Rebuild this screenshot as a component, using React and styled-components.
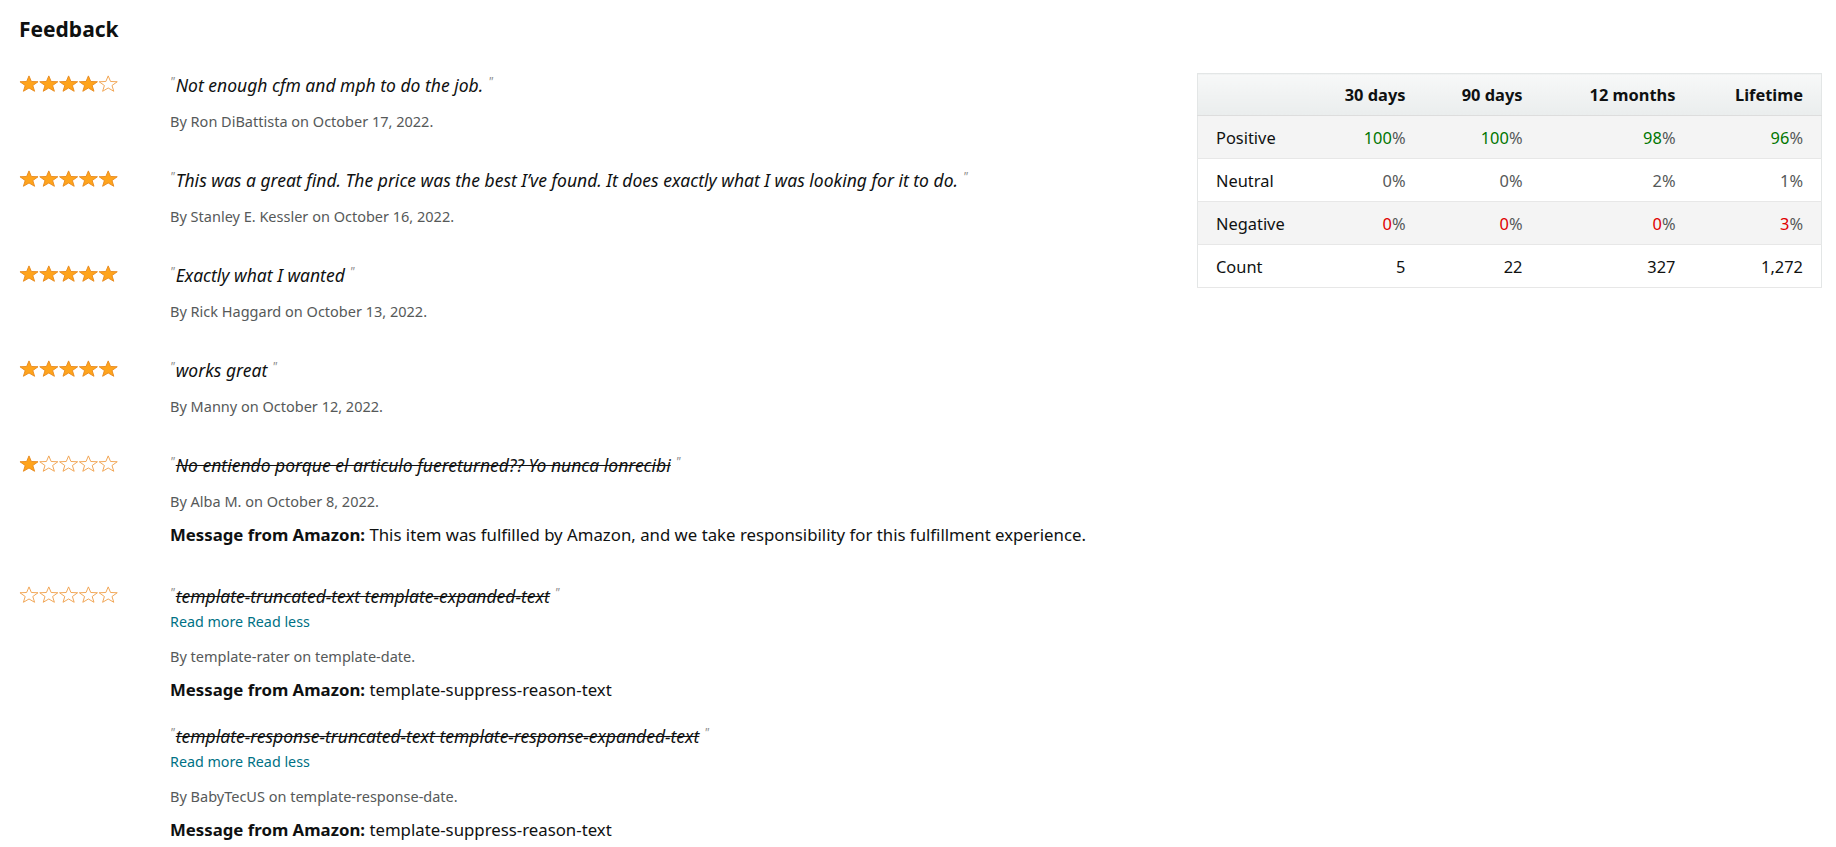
import React from 'react';
import styled, { createGlobalStyle } from 'styled-components';

const GlobalStyle = createGlobalStyle`
  body {
    margin: 0;
    background: #fff;
    font-family: "Noto Sans", "Liberation Sans", sans-serif;
    color: #0f1111;
  }
`;

const Page = styled.div`
  padding: 12px 14px 0 19px;
`;

const Title = styled.h3`
  margin: 0 0 27px;
  font-size: 21px;
  line-height: 34px;
  font-weight: 700;
`;

const Layout = styled.div`
  display: flex;
  justify-content: space-between;
  align-items: flex-start;
`;

const List = styled.div`
  display: flex;
  flex-direction: column;
`;

const Row = styled.div`
  display: grid;
  grid-template-columns: 151px 1fr;
  padding-bottom: 37px;
`;

const Stars = styled.svg`
  display: block;
  margin-top: 2px;
`;

const Body = styled.div`
  display: flex;
  flex-direction: column;
  align-items: flex-start;
`;

const Quote = styled.div`
  font-size: 17.5px;
  line-height: 24px;
  font-style: italic;
  margin-top: ${(p) => (p.$gap ? '22px' : '0')};
`;

const Mark = styled.span`
  color: #8a8a8a;
  font-size: 12px;
  line-height: 1;
  vertical-align: 6px;
  margin: ${(p) => (p.$end ? '0 0 0 5px' : '0 1px 0 0')};
`;

const Struck = styled.span`
  text-decoration: ${(p) => (p.$struck ? 'line-through' : 'none')};
`;

const ReadMore = styled.a`
  margin-top: 4px;
  font-size: 14.3px;
  line-height: 20px;
  color: #007185;
  text-decoration: none;
  cursor: pointer;
`;

const Byline = styled.div`
  margin-top: 14px;
  font-size: 14.5px;
  line-height: 20px;
  color: #565959;
`;

const Message = styled.div`
  margin-top: 12px;
  font-size: 16.8px;
  line-height: 24px;

  b {
    font-weight: 700;
  }
`;

const Table = styled.table`
  width: 624px;
  table-layout: fixed;
  border-collapse: collapse;
  border: 1px solid #e3e6e6;
  font-size: 16.4px;
`;

const Col = styled.col`
  width: ${(p) => p.$w}px;
`;

const Th = styled.th`
  height: 41px;
  padding: 0 18px;
  text-align: ${(p) => (p.$left ? 'left' : 'right')};
  font-weight: 700;
  background: linear-gradient(to bottom, #f7f8f8, #eaeded);
  border-bottom: 1px solid #dddddd;
`;

const Tr = styled.tr`
  background: ${(p) => (p.$shade ? '#f4f4f4' : '#fff')};
  border-bottom: 1px solid #e7e7e7;
`;

const Td = styled.td`
  height: 42px;
  padding: 0 18px;
  text-align: ${(p) => (p.$left ? 'left' : 'right')};
  color: ${(p) => p.$color || '#0f1111'};
`;

const Good = styled.span`
  color: #007600;
`;

const Bad = styled.span`
  color: #e00000;
`;

const STAR = '10,1 12.35,7.26 19.03,7.56 13.8,11.74 15.58,18.19 10,14.5 4.42,18.19 6.2,11.74 0.97,7.56 7.65,7.26';

const Rating = ({ value }) => (
  <Stars width="100" height="17" viewBox="0 0 100 19" preserveAspectRatio="none">
    {[0, 1, 2, 3, 4].map((i) => (
      <polygon
        key={i}
        points={STAR}
        transform={`translate(${i * 19.8} 0)`}
        fill={i < value ? '#ffa41c' : '#fff'}
        stroke={i < value ? '#e88b1f' : '#f0a24e'}
        strokeWidth="1"
        strokeLinejoin="round"
      />
    ))}
  </Stars>
);

const QuoteText = ({ children, struck, gap }) => (
  <Quote $gap={gap}>
    <Mark>"</Mark>
    <Struck $struck={struck}>{children}</Struck>
    <Mark $end>"</Mark>
  </Quote>
);

const feedback = [
  { stars: 4, text: 'Not enough cfm and mph to do the job.', by: 'Ron DiBattista', date: 'October 17, 2022' },
  {
    stars: 5,
    text: 'This was a great find. The price was the best I’ve found. It does exactly what I was looking for it to do.',
    by: 'Stanley E. Kessler',
    date: 'October 16, 2022',
  },
  { stars: 5, text: 'Exactly what I wanted', by: 'Rick Haggard', date: 'October 13, 2022' },
  { stars: 5, text: 'works great', by: 'Manny', date: 'October 12, 2022' },
  {
    stars: 1,
    text: 'No entiendo porque el articulo fuereturned?? Yo nunca lonrecibi',
    struck: true,
    by: 'Alba M.',
    date: 'October 8, 2022',
    message: 'This item was fulfilled by Amazon, and we take responsibility for this fulfillment experience.',
  },
];

const stats = [
  { label: 'Positive', shade: true, values: ['100', '100', '98', '96'], kind: 'good' },
  { label: 'Neutral', values: ['0', '0', '2', '1'], kind: 'neutral' },
  { label: 'Negative', shade: true, values: ['0', '0', '0', '3'], kind: 'bad' },
  { label: 'Count', values: ['5', '22', '327', '1,272'], kind: 'count' },
];

const renderValue = (kind, v) => {
  if (kind === 'good') return <><Good>{v}</Good>%</>;
  if (kind === 'bad') return <><Bad>{v}</Bad>%</>;
  if (kind === 'neutral') return `${v}%`;
  return v;
};

const App = () => {
  return (
    <Page>
      <GlobalStyle />
      <Title>Feedback</Title>
      <Layout>
        <List>
          {feedback.map((f) => (
            <Row key={f.by}>
              <Rating value={f.stars} />
              <Body>
                <QuoteText struck={f.struck}>{f.text}</QuoteText>
                <Byline>
                  By {f.by} on {f.date}.
                </Byline>
                {f.message && (
                  <Message>
                    <b>Message from Amazon:</b> {f.message}
                  </Message>
                )}
              </Body>
            </Row>
          ))}
          <Row>
            <Rating value={0} />
            <Body>
              <QuoteText struck>template-truncated-text template-expanded-text</QuoteText>
              <ReadMore>Read more Read less</ReadMore>
              <Byline>By template-rater on template-date.</Byline>
              <Message>
                <b>Message from Amazon:</b> template-suppress-reason-text
              </Message>
              <QuoteText struck gap>
                template-response-truncated-text template-response-expanded-text
              </QuoteText>
              <ReadMore>Read more Read less</ReadMore>
              <Byline>By BabyTecUS on template-response-date.</Byline>
              <Message>
                <b>Message from Amazon:</b> template-suppress-reason-text
              </Message>
            </Body>
          </Row>
        </List>
        <Table>
          <colgroup>
            <Col $w={110} />
            <Col $w={116} />
            <Col $w={117} />
            <Col $w={153} />
            <Col $w={128} />
          </colgroup>
          <thead>
            <tr>
              <Th $left />
              <Th>30 days</Th>
              <Th>90 days</Th>
              <Th>12 months</Th>
              <Th>Lifetime</Th>
            </tr>
          </thead>
          <tbody>
            {stats.map((s) => (
              <Tr key={s.label} $shade={s.shade}>
                <Td $left>{s.label}</Td>
                {s.values.map((v, i) => (
                  <Td key={i} $color={s.kind === 'count' ? '#0f1111' : '#565959'}>
                    {renderValue(s.kind, v)}
                  </Td>
                ))}
              </Tr>
            ))}
          </tbody>
        </Table>
      </Layout>
    </Page>
  );
};

export default App;
